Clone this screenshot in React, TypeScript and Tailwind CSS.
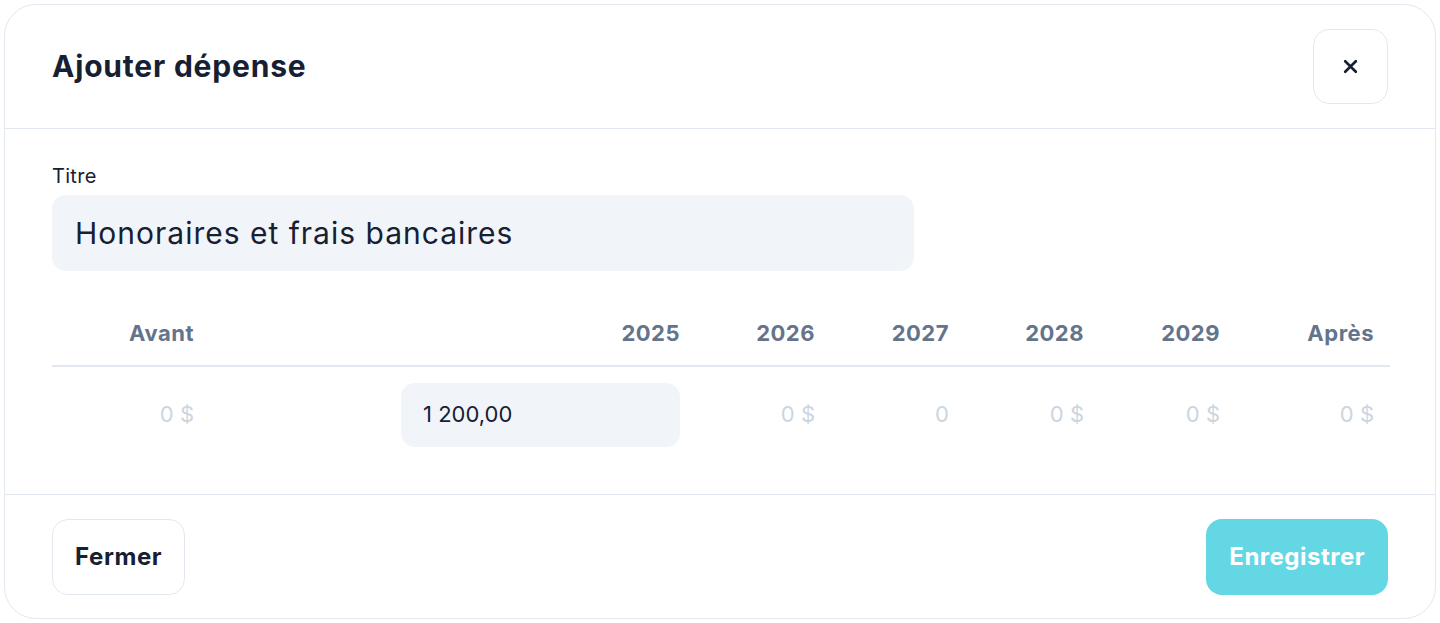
import React from 'react';

const years = [
  { label: 'Avant', value: '0 $' },
  { label: '2025', value: null },
  { label: '2026', value: '0 $' },
  { label: '2027', value: '0' },
  { label: '2028', value: '0 $' },
  { label: '2029', value: '0 $' },
  { label: 'Après', value: '0 $' },
];

export default function App() {
  return (
    <div className="w-[1440px] h-[623px] bg-white p-1 font-['Inter',sans-serif]">
      {/* Modal */}
      <div className="h-[615px] rounded-[32px] border border-[#e2e8f0] bg-white flex flex-col overflow-hidden">
        {/* Header */}
        <div className="h-[124px] shrink-0 flex items-center justify-between pl-[47px] pr-[47px] border-b border-[#e2e8f0]">
          <h2 className="text-[30px] font-bold text-[#172033] tracking-[0.8px]">Ajouter dépense</h2>
          <button className="w-[75px] h-[75px] rounded-2xl border border-[#e2e8f0] flex items-center justify-center text-[#172033]">
            <svg width="17" height="17" viewBox="0 0 16 16" fill="none" stroke="currentColor" strokeWidth="2.5" strokeLinecap="round">
              <path d="M3 3l10 10M13 3L3 13" />
            </svg>
          </button>
        </div>

        {/* Content */}
        <div className="h-[366px] shrink-0 px-[47px] pt-[33px] border-b border-[#e2e8f0]">
          <label className="block text-[20px] leading-[28px] text-[#172033] tracking-[0.3px]">Titre</label>
          <div className="mt-[5px] w-[862px] h-[76px] rounded-[14px] bg-[#f1f5f9] flex items-center px-[23px] text-[30px] text-[#172033] tracking-[1px]">
            Honoraires et frais bancaires
          </div>

          <div className="mt-[29px] w-[1338px]">
            <div className="grid grid-cols-[158px_486px_135px_134px_135px_136px_154px] h-[67px] items-center pt-[2px] border-b-2 border-[#e2e8f0]">
              {years.map((y) => (
                <div key={y.label} className="text-right pr-4 text-[22px] font-bold text-[#64748b] tracking-[0.5px]">
                  {y.label}
                </div>
              ))}
            </div>
            <div className="grid grid-cols-[158px_486px_135px_134px_135px_136px_154px] h-[95px] items-center">
              {years.map((y) =>
                y.value === null ? (
                  <div key={y.label} className="flex justify-end pr-4">
                    <div className="w-[279px] h-[64px] rounded-[14px] bg-[#f1f5f9] flex items-center px-[22px] text-[22px] text-[#172033]">
                      1 200,00
                    </div>
                  </div>
                ) : (
                  <div key={y.label} className="text-right pr-4 text-[22px] text-[#cbd5e1]">
                    {y.value}
                  </div>
                )
              )}
            </div>
          </div>
        </div>

        {/* Footer */}
        <div className="flex-1 flex items-center justify-between px-[47px]">
          <button className="h-[76px] px-[22px] rounded-2xl border border-[#e2e8f0] text-[24px] font-bold text-[#172033] tracking-[0.6px]">
            Fermer
          </button>
          <button className="h-[76px] px-[23px] rounded-2xl bg-[#63d8e4] text-[24px] font-bold text-white tracking-[0.5px]">
            Enregistrer
          </button>
        </div>
      </div>
    </div>
  );
}
